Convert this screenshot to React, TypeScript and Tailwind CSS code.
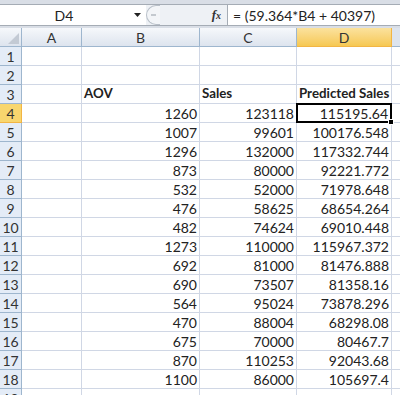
import React from "react";

const ROWS: [number, string, string, string][] = [
  [1, "", "", ""],
  [2, "", "", ""],
  [3, "AOV", "Sales", "Predicted Sales"],
  [4, "1260", "123118", "115195.64"],
  [5, "1007", "99601", "100176.548"],
  [6, "1296", "132000", "117332.744"],
  [7, "873", "80000", "92221.772"],
  [8, "532", "52000", "71978.648"],
  [9, "476", "58625", "68654.264"],
  [10, "482", "74624", "69010.448"],
  [11, "1273", "110000", "115967.372"],
  [12, "692", "81000", "81476.888"],
  [13, "690", "73507", "81358.16"],
  [14, "564", "95024", "73878.296"],
  [15, "470", "88004", "68298.08"],
  [16, "675", "70000", "80467.7"],
  [17, "870", "110253", "92043.68"],
  [18, "1100", "86000", "105697.4"],
  [19, "", "", ""],
];

const font = { fontFamily: "Lato, 'Liberation Sans', sans-serif" };

function RowHead({ n }: { n: number }) {
  const active = n === 4;
  return (
    <div
      className={`flex h-[19px] items-center justify-center border-b border-r text-[14px] ${
        active ? "border-[#f2b544] bg-[#f8d66e] text-[#333]" : "border-[#9eb6ce] bg-[#e4ecf7] text-[#333]"
      }`}
    >
      {n}
    </div>
  );
}

function Cell({ v, bold, right }: { v: string; bold?: boolean; right?: boolean }) {
  return (
    <div
      className={`flex h-[19px] items-center overflow-visible whitespace-nowrap border-b border-r border-[#d0d7e5] px-[2px] text-[#222] ${
        right ? "justify-end" : "justify-start"
      } ${bold ? "text-[13.3px] font-bold" : "text-[14px]"}`}
    >
      {v}
    </div>
  );
}

export default function App() {
  return (
    <div className="h-[395px] w-[400px] overflow-hidden bg-white" style={font}>
      <div className="h-[4px] bg-[#d9dee6]" />
      {/* formula bar */}
      <div className="flex h-[22px] items-center border-y border-[#a5acb5] bg-white">
        <div className="flex h-full w-[128px] items-center justify-center text-[14px] text-[#222]">D4</div>
        <div className="flex w-[18px] items-center justify-center">
          <svg width="7" height="4" viewBox="0 0 7 4"><path d="M0 0h7L3.5 4z" fill="#222" /></svg>
        </div>
        <div className="flex h-full w-[81px] items-center bg-[#eef1f5]">
          <div className="flex h-[20px] w-[14px] items-center justify-center rounded-l-full border border-r-0 border-[#b9c0c9] bg-[#f3f5f8]">
            <div className="h-[2px] w-[5px] bg-[#c4c9cf]" />
          </div>
          <div className="flex-1" />
          <span className="mr-[6px] text-[13px] font-bold italic text-[#333]" style={{ fontFamily: "'Liberation Serif', serif" }}>
            f<span className="text-[10px]">x</span>
          </span>
        </div>
        <div className="h-full w-px bg-[#a5acb5]" />
        <div className="pl-[5px] text-[14px] text-[#222]">= (59.364*B4 + 40397)</div>
      </div>
      <div className="h-[2px] bg-[#d9dee6]" />
      {/* grid */}
      <div className="grid grid-cols-[22px_60px_118px_97px_95px_8px]">
        <div className="flex h-[19px] items-end justify-end border-b border-r border-[#9eb6ce] bg-gradient-to-b from-[#f6f8fb] to-[#dde4ee] pb-[2px] pr-[2px]">
          <svg width="11" height="11" viewBox="0 0 11 11"><path d="M11 0V11H0z" fill="#c3cad4" /></svg>
        </div>
        {["A", "B", "C", "D"].map((c) => (
          <div
            key={c}
            className={`flex h-[19px] items-center justify-center border-b border-r text-[14px] text-[#333] ${
              c === "D"
                ? "border-[#f2b544] bg-gradient-to-b from-[#fbe29d] to-[#f6c851]"
                : "border-[#9eb6ce] bg-gradient-to-b from-[#f6f8fb] to-[#dde4ee]"
            }`}
          >
            {c}
          </div>
        ))}
        <div className="h-[19px] border-b border-[#9eb6ce] bg-[#dde4ee]" />
        {ROWS.map(([n, b, c, d]) => (
          <React.Fragment key={n}>
            <RowHead n={n} />
            <Cell v="" />
            <Cell v={b} bold={n === 3} right={n !== 3} />
            <Cell v={c} bold={n === 3} right={n !== 3} />
            {n === 4 ? (
              <div className="relative -ml-px -mt-px flex h-[20px] w-[96px] items-center justify-end border-2 border-black px-[2px] text-[14px] text-[#222]">
                {d}
                <div className="absolute -bottom-[4px] -right-[4px] h-[6px] w-[6px] border border-white bg-black" />
              </div>
            ) : (
              <Cell v={d} bold={n === 3} right={n !== 3} />
            )}
            <div className="h-[19px] border-b border-[#d0d7e5]" />
          </React.Fragment>
        ))}
      </div>
    </div>
  );
}
